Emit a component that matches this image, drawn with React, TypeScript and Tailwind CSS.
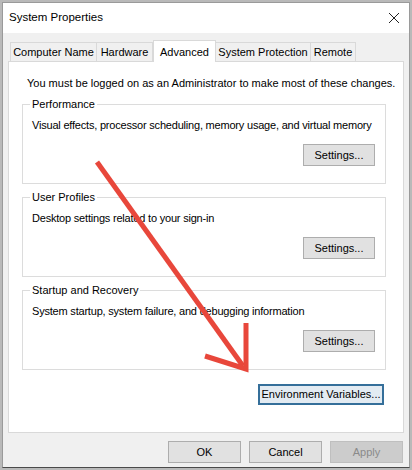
import React from 'react';

// Tabs across the top of the dialog
const tabs = [
  { label: 'Computer Name', width: 'w-[87px]' },
  { label: 'Hardware', width: 'w-[57px]' },
  { label: 'Advanced', width: 'w-[63px]', active: true },
  { label: 'System Protection', width: 'w-[96px]' },
  { label: 'Remote', width: 'w-[46px]' },
];

interface GroupProps {
  title: string;
  text: string;
}

const WinButton: React.FC<{ label: string; className?: string; disabled?: boolean }> = ({
  label,
  className = '',
  disabled,
}) => (
  <button
    type="button"
    className={
      'flex items-center justify-center border text-[11px] leading-none ' +
      (disabled
        ? 'bg-[#cccccc] border-[#bfbfbf] text-[#8a8a8a] '
        : 'bg-[#e1e1e1] border-[#adadad] text-black ') +
      className
    }
  >
    {label}
  </button>
);

const Group: React.FC<GroupProps> = ({ title, text }) => (
  <div className="relative w-[364px] h-[80px] border border-[#dcdcdc] pt-[13px] pl-[9px] pr-[10px]">
    <span className="absolute -top-[8px] left-[7px] bg-white px-[2px] text-[11px] leading-[14px]">
      {title}
    </span>
    <p className="text-[11px] leading-[14px] whitespace-nowrap tracking-[-0.2px]">{text}</p>
    <div className="flex justify-end mt-[12px]">
      <WinButton label="Settings..." className="w-[72px] h-[22px]" />
    </div>
  </div>
);

export default function App() {
  return (
    <div
      className="relative w-[412px] h-[470px] bg-[#b9b9b9] pt-[2px] pl-[2px] overflow-hidden"
      style={{ fontFamily: '"Liberation Sans", Arial, sans-serif' }}
    >
      <div className="w-[408px] h-[466px] border border-[#9a9a9a] border-b-[#4a4a4a] bg-[#f0f0f0] flex flex-col">
        {/* title bar */}
        <div className="h-[30px] bg-white flex items-center justify-between pl-[6px] pr-[8px]">
          <span className="text-[11.5px] text-black">System Properties</span>
          <svg width="12" height="12" viewBox="0 0 12 12" className="mr-[1px]">
            <path d="M1 1 L11 11 M11 1 L1 11" stroke="#222" strokeWidth="1" fill="none" />
          </svg>
        </div>

        <div className="flex flex-col px-[5px] pt-[7px]">
          {/* tabs */}
          <div className="flex items-end h-[21px] pl-[2px] relative z-10">
            {tabs.map(t =>
              t.active ? (
                <div
                  key={t.label}
                  className={`${t.width} h-[22px] -mb-px bg-white border border-b-0 border-[#d9d9d9] flex items-start justify-center pt-[3px] text-[11px]`}
                >
                  {t.label}
                </div>
              ) : (
                <div
                  key={t.label}
                  className={`${t.width} h-[19px] bg-[#f0f0f0] border border-b-0 border-[#d9d9d9] -ml-px first:ml-0 flex items-center justify-center text-[11px]`}
                >
                  {t.label}
                </div>
              )
            )}
          </div>

          {/* tab panel */}
          <div className="h-[372px] bg-white border border-[#d9d9d9] pl-[13px] pt-[14px]">
            <p className="text-[11px] leading-[14px] pl-[5px]">
              You must be logged on as an Administrator to make most of these changes.
            </p>
            <div className="flex flex-col gap-[13px] mt-[14px]">
              <Group
                title="Performance"
                text="Visual effects, processor scheduling, memory usage, and virtual memory"
              />
              <Group title="User Profiles" text="Desktop settings related to your sign-in" />
              <Group
                title="Startup and Recovery"
                text="System startup, system failure, and debugging information"
              />
            </div>
            <div className="flex justify-end w-[362px] mt-[14px]">
              <button
                type="button"
                className="w-[126px] h-[21px] border-2 border-[#356f9a] bg-[#e3ebf2] text-[11px] leading-none flex items-center justify-center"
              >
                Environment Variables...
              </button>
            </div>
          </div>

          {/* dialog buttons */}
          <div className="flex justify-end gap-[8px] mt-[8px] pr-[1px]">
            <WinButton label="OK" className="w-[73px] h-[22px]" />
            <WinButton label="Cancel" className="w-[73px] h-[22px]" />
            <WinButton label="Apply" className="w-[73px] h-[22px]" disabled />
          </div>
        </div>
      </div>

      {/* red annotation arrow */}
      <svg className="absolute inset-0 pointer-events-none" width="412" height="470">
        <line x1="97" y1="162" x2="243" y2="366" stroke="#e8473b" strokeWidth="5" />
        <polyline
          points="205,356 246,369 246,323"
          fill="none"
          stroke="#e8473b"
          strokeWidth="5"
          strokeLinejoin="miter"
        />
      </svg>
    </div>
  );
}
